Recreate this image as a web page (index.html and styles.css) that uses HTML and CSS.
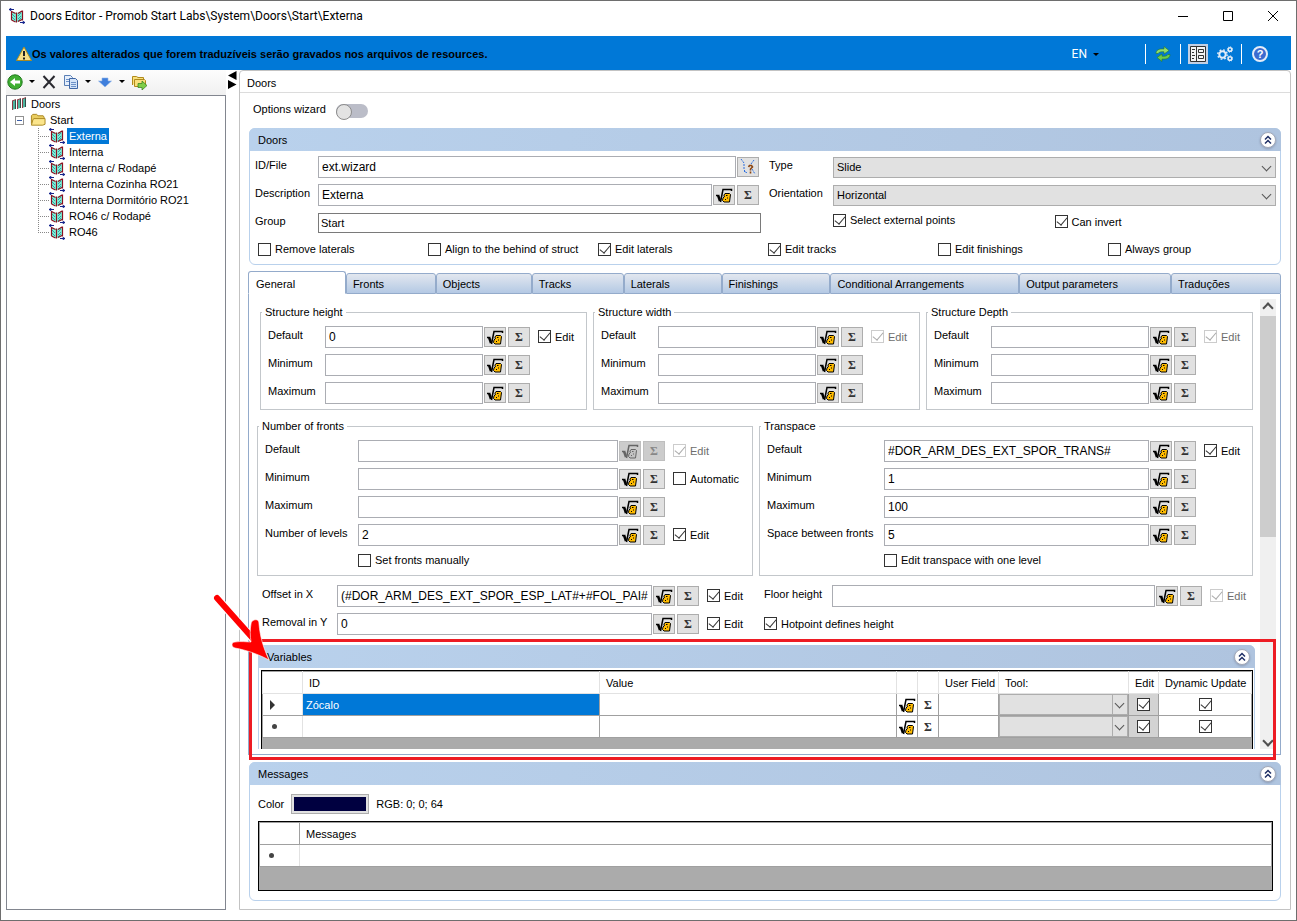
FILE: index.html
```html
<!DOCTYPE html>
<html lang="en">
<head>
    <meta charset="UTF-8">
    <meta name="viewport" content="width=device-width, initial-scale=1.0">
    <title>Doors Editor</title>
    <link rel="stylesheet" href="styles.css">
</head>
<body>
    <!-- Shared icons -->
    <svg class="sprite" aria-hidden="true">
        <symbol id="i-door" viewBox="0 0 16 16">
            <path d="M2 3l5 2v9l-5-2zM8 5l5-2v9l-5 2z" fill="#7df0d8"/>
            <path d="M3 6l3 3M3 9l3 3M9 8l3-3M9 11l3-3M9 13l3-3" stroke="#2fa5a8" stroke-width="1"/>
            <path d="M2.500 3v9M2.500 3.500l4 2M7.500 4.500v10M9 5.500l4-2.500M13.500 2.500v10M2.500 12l4 2M9 13.500l4-2" fill="none" stroke="#8b1020" stroke-width="1.200"/>
            <path d="M0 1.500h5M0 1.500l2-1v2zM11 14.500h5M16 14.500l-2-1v2z" stroke="#15248c" fill="#15248c" stroke-width="1"/>
        </symbol>
        <symbol id="i-root" viewBox="0 0 16 16">
            <path d="M1 5l3-1v9l-3 1zM6 4l3-1v9l-3 1zM11 3l3-1v9l-3 1z" fill="#4fb59f"/>
            <path d="M1.500 5v9M6.500 4v9M11.500 3v9M1 5l4-1.500M6 4l4-1.500M11 3l4-1.500" fill="none" stroke="#8f3a44" stroke-width="1"/>
            <path d="M4.500 4v9M9.500 3v9M14.500 2v9" stroke="#2f4f4a" stroke-width="1"/>
        </symbol>
        <symbol id="i-folder" viewBox="0 0 17 16">
            <path d="M1.500 12V3.500L3 2h4l1.500 1.500H14L15 5v2" fill="#e9cd60" stroke="#a98520"/>
            <path d="M1.500 13.500h12l2.500-1V6.500L4 6.500l-1 1.500z" fill="#fbe58c" stroke="#a98520"/>
        </symbol>
        <symbol id="i-root-a" viewBox="0 0 18 18">
            <path d="M1 9.500h2" stroke="#000" stroke-width="1.500"/>
            <path d="M3 9l2 6" stroke="#000" stroke-width="2.500"/>
            <path d="M5.500 16L8 3.500h8.500V5" fill="none" stroke="#000" stroke-width="1.500"/>
            <path d="M10 7.500h4.500l1 1-1 7.500H9l-1.500-1.500L8 12l1.500-1.500H9V9z" fill="#fb0" stroke="#000" stroke-width="1"/>
            <path d="M11 9.500h1.500M10 13.500h1M12.500 11.500v1" stroke="#000" stroke-width="1"/>
        </symbol>
        <symbol id="i-up" viewBox="0 0 18 18">
            <circle cx="9" cy="9" r="7.500" fill="#fff" stroke="#a3a9b8" stroke-width="1"/>
            <path d="M6 8.500l3-3 3 3M6 12.500l3-3 3 3" fill="none" stroke="#1f2f66" stroke-width="1.500"/>
        </symbol>
    </svg>

    <div class="window">
        <header class="titlebar">
            <svg class="icon"><use href="#i-door"/></svg>
            <h1>Doors Editor - Promob Start Labs\System\Doors\Start\Externa</h1>
            <div class="win-buttons">
                <button aria-label="Minimize"><svg viewBox="0 0 12 12"><path d="M1 6.500h10" stroke="#000"/></svg></button>
                <button aria-label="Maximize"><svg viewBox="0 0 12 12"><path d="M1.500 1.500h9v9h-9z" fill="none" stroke="#000"/></svg></button>
                <button aria-label="Close"><svg viewBox="0 0 12 12"><path d="M1 1l10 10M11 1L1 11" stroke="#000"/></svg></button>
            </div>
        </header>

        <div class="banner">
            <svg class="icon" viewBox="0 0 16 16"><path d="M8 1l7.500 13.500H.5z" fill="#f8e08a" stroke="#a98a20"/><path d="M8 5v5M8 11.500v2" stroke="#222" stroke-width="2"/></svg>
            <strong>Os valores alterados que forem traduzíveis serão gravados nos arquivos de resources.</strong>
            <button class="lang">EN <span class="caret"></span></button>
            <div class="banner-tools">
                <button aria-label="Refresh"><svg class="icon" viewBox="0 0 16 16"><path d="M1 7.500C1 4 4 2.500 9 3V.5l5 4-5 3.500V5.800C6 5.500 4 6 3 7.500z" fill="#8fdc6c" stroke="#2c7a22" stroke-width=".6"/><path d="M15 8.500c0 3.500-3 5-8 4.500v2.500l-5-4L7 8v2.200c3 .3 5-.2 6-1.700z" fill="#6acb4c" stroke="#2c7a22" stroke-width=".6"/></svg></button>
                <button class="pressed" aria-label="Form view"><svg class="icon" viewBox="0 0 16 16"><path d="M.5.5h15v15H.5z" fill="#f4f4f4" stroke="#333"/><path d="M6.500 1v14M2 3.500h3M2 6.500h2M2 9.500h3M2 12.500h2M8.500 3.500h5v3h-5zM8.500 9.500h5v3h-5z" fill="none" stroke="#333"/></svg></button>
                <button aria-label="Settings"><svg class="icon" viewBox="0 0 16 16"><circle cx="5.500" cy="8.500" r="3.200" fill="none" stroke="#e4edf7" stroke-width="2"/><circle cx="5.500" cy="8.500" r="4.700" fill="none" stroke="#e4edf7" stroke-width="1.400" stroke-dasharray="1.800 1.900"/><circle cx="13" cy="3.500" r="1.800" fill="none" stroke="#e4edf7" stroke-width="1.500"/><circle cx="13" cy="3.500" r="2.700" fill="none" stroke="#e4edf7" stroke-dasharray="1 1.100"/><circle cx="13" cy="12.500" r="1.800" fill="none" stroke="#e4edf7" stroke-width="1.500"/><circle cx="13" cy="12.500" r="2.700" fill="none" stroke="#e4edf7" stroke-dasharray="1 1.100"/></svg></button>
                <button class="help" aria-label="Help"><span>?</span></button>
            </div>
        </div>

        <div class="content">
            <aside class="sidebar">
                <div class="toolbar">
                    <button aria-label="Back"><svg class="icon" viewBox="0 0 16 16"><circle cx="8" cy="8" r="7.200" fill="#3fae32" stroke="#1f7a1c"/><path d="M3 8l5-4v2.500h5v3H8V12z" fill="#fff"/></svg></button>
                    <span class="caret"></span>
                    <button aria-label="Delete"><svg class="icon" viewBox="0 0 16 16"><path d="M2.500 2l11 12M13.500 2l-11 12" stroke="#2a2a30" stroke-width="2"/></svg></button>
                    <button aria-label="Copy"><svg class="icon" viewBox="0 0 16 16"><path d="M1.500 1.500h6l2 2v8h-8z" fill="#e6effb" stroke="#5a7fb5"/><path d="M6.500 4.500h6l2 2v8h-8z" fill="#d3e3f8" stroke="#3f66a5"/><path d="M3 5.500h3M3 7.500h3M8 8.500h5M8 10.500h5M8 12.500h5" stroke="#6d92c8"/></svg></button>
                    <span class="caret"></span>
                    <button aria-label="Move down"><svg class="icon" viewBox="0 0 16 16"><path d="M5 4h6v3h3.500L8 13 1.500 7H5z" fill="#3f7fdc" stroke="#8fb4e8" stroke-width=".6"/></svg></button>
                    <span class="caret"></span>
                    <button aria-label="Export"><svg class="icon" viewBox="0 0 16 16"><path d="M1.500 11V2.500h4l1.500 1h5.500v2M3.500 12.500v-7h10l1 1v4.500l-2 1.500z" fill="#f9e07c" stroke="#b08a1c"/><path d="M7 9.500h4V7l5 4.500-5 4.500v-2.500H7z" fill="#7fce48" stroke="#2f7d1a" stroke-width=".7"/></svg></button>
                </div>
                <ul class="tree">
                    <li><svg class="icon"><use href="#i-root"/></svg><span>Doors</span></li>
                    <li class="level1"><i class="expander"></i><svg class="icon"><use href="#i-folder"/></svg><span>Start</span></li>
                    <li class="level2"><i class="branch"></i><svg class="icon"><use href="#i-door"/></svg><span class="selected">Externa</span></li>
                    <li class="level2"><i class="branch"></i><svg class="icon"><use href="#i-door"/></svg><span>Interna</span></li>
                    <li class="level2"><i class="branch"></i><svg class="icon"><use href="#i-door"/></svg><span>Interna c/ Rodapé</span></li>
                    <li class="level2"><i class="branch"></i><svg class="icon"><use href="#i-door"/></svg><span>Interna Cozinha RO21</span></li>
                    <li class="level2"><i class="branch"></i><svg class="icon"><use href="#i-door"/></svg><span>Interna Dormitório RO21</span></li>
                    <li class="level2"><i class="branch"></i><svg class="icon"><use href="#i-door"/></svg><span>RO46 c/ Rodapé</span></li>
                    <li class="level2"><i class="branch last"></i><svg class="icon"><use href="#i-door"/></svg><span>RO46</span></li>
                </ul>
            </aside>

            <div class="splitter">
                <svg viewBox="0 0 9 18"><path d="M8.500 0v9L0 4.500zM0 9v9l8.500-4.500z"/></svg>
            </div>

            <main class="editor">
                <h2 class="editor-title">Doors</h2>
                <div class="wizard">
                    <label for="wizard">Options wizard</label>
                    <input type="checkbox" class="switch" id="wizard">
                </div>

                <section class="group">
                    <div class="group-header"><h3>Doors</h3><button class="collapse" aria-label="Collapse"><svg><use href="#i-up"/></svg></button></div>
                    <div class="door-form">
                        <div class="row">
                            <label for="file">ID/File</label>
                            <input type="text" id="file" value="ext.wizard">
                            <button class="tool" aria-label="Pick"><svg viewBox="0 0 18 18"><path d="M2 1l3 4v7l3 3M15 2l-3 4M13 11l3 5M5 13l2 2" fill="none" stroke="#2c6fe0" stroke-dasharray="2 1"/><path d="M9.500 9l1-1.500h2l1 1.500-2 2v1.500M11.500 13.500v2" fill="none" stroke="#8a4512" stroke-width="1.600"/></svg></button>
                        </div>
                        <div class="row">
                            <label for="type">Type</label>
                            <span class="select"><select id="type"><option>Slide</option></select></span>
                        </div>
                        <div class="row">
                            <label for="desc">Description</label>
                            <input type="text" id="desc" value="Externa">
                            <button class="tool" aria-label="Formula"><svg><use href="#i-root-a"/></svg></button>
                            <button class="tool sum">Σ</button>
                        </div>
                        <div class="row">
                            <label for="orient">Orientation</label>
                            <span class="select"><select id="orient"><option>Horizontal</option></select></span>
                        </div>
                        <div class="row">
                            <label for="group">Group</label>
                            <input type="text" class="combo" id="group" value="Start">
                        </div>
                        <div class="row pair">
                            <label class="check"><input type="checkbox" checked>Select external points</label>
                            <label class="check"><input type="checkbox" checked>Can invert</label>
                        </div>
                    </div>
                    <div class="flags">
                        <label class="check"><input type="checkbox">Remove laterals</label>
                        <label class="check"><input type="checkbox">Align to the behind of struct</label>
                        <label class="check"><input type="checkbox" checked>Edit laterals</label>
                        <label class="check"><input type="checkbox" checked>Edit tracks</label>
                        <label class="check"><input type="checkbox">Edit finishings</label>
                        <label class="check"><input type="checkbox">Always group</label>
                    </div>
                </section>

                <nav class="tabs">
                    <button class="tab active">General</button>
                    <button class="tab">Fronts</button>
                    <button class="tab">Objects</button>
                    <button class="tab">Tracks</button>
                    <button class="tab">Laterals</button>
                    <button class="tab">Finishings</button>
                    <button class="tab">Conditional Arrangements</button>
                    <button class="tab">Output parameters</button>
                    <button class="tab">Traduções</button>
                </nav>

                <div class="tab-panel">
                    <div class="pane">
                        <div class="structs">
                            <fieldset>
                                <legend>Structure height</legend>
                                <div class="row"><label for="sh1">Default</label><input type="text" id="sh1" value="0"><button class="tool" aria-label="Formula"><svg><use href="#i-root-a"/></svg></button><button class="tool sum">Σ</button><label class="check"><input type="checkbox" checked>Edit</label></div>
                                <div class="row"><label for="sh2">Minimum</label><input type="text" id="sh2"><button class="tool" aria-label="Formula"><svg><use href="#i-root-a"/></svg></button><button class="tool sum">Σ</button><span class="check"></span></div>
                                <div class="row"><label for="sh3">Maximum</label><input type="text" id="sh3"><button class="tool" aria-label="Formula"><svg><use href="#i-root-a"/></svg></button><button class="tool sum">Σ</button><span class="check"></span></div>
                            </fieldset>
                            <fieldset>
                                <legend>Structure width</legend>
                                <div class="row"><label for="sw1">Default</label><input type="text" id="sw1"><button class="tool" aria-label="Formula"><svg><use href="#i-root-a"/></svg></button><button class="tool sum">Σ</button><label class="check off"><input type="checkbox" checked disabled>Edit</label></div>
                                <div class="row"><label for="sw2">Minimum</label><input type="text" id="sw2"><button class="tool" aria-label="Formula"><svg><use href="#i-root-a"/></svg></button><button class="tool sum">Σ</button><span class="check"></span></div>
                                <div class="row"><label for="sw3">Maximum</label><input type="text" id="sw3"><button class="tool" aria-label="Formula"><svg><use href="#i-root-a"/></svg></button><button class="tool sum">Σ</button><span class="check"></span></div>
                            </fieldset>
                            <fieldset>
                                <legend>Structure Depth</legend>
                                <div class="row"><label for="sd1">Default</label><input type="text" id="sd1"><button class="tool" aria-label="Formula"><svg><use href="#i-root-a"/></svg></button><button class="tool sum">Σ</button><label class="check off"><input type="checkbox" checked disabled>Edit</label></div>
                                <div class="row"><label for="sd2">Minimum</label><input type="text" id="sd2"><button class="tool" aria-label="Formula"><svg><use href="#i-root-a"/></svg></button><button class="tool sum">Σ</button><span class="check"></span></div>
                                <div class="row"><label for="sd3">Maximum</label><input type="text" id="sd3"><button class="tool" aria-label="Formula"><svg><use href="#i-root-a"/></svg></button><button class="tool sum">Σ</button><span class="check"></span></div>
                            </fieldset>
                        </div>

                        <div class="halves">
                            <fieldset class="fronts">
                                <legend>Number of fronts</legend>
                                <div class="row"><label for="nf1">Default</label><input type="text" id="nf1"><button class="tool" aria-label="Formula" disabled><svg><use href="#i-root-a"/></svg></button><button class="tool sum" disabled>Σ</button><label class="check off"><input type="checkbox" checked disabled>Edit</label></div>
                                <div class="row"><label for="nf2">Minimum</label><input type="text" id="nf2"><button class="tool" aria-label="Formula"><svg><use href="#i-root-a"/></svg></button><button class="tool sum">Σ</button><label class="check"><input type="checkbox">Automatic</label></div>
                                <div class="row"><label for="nf3">Maximum</label><input type="text" id="nf3"><button class="tool" aria-label="Formula"><svg><use href="#i-root-a"/></svg></button><button class="tool sum">Σ</button><span class="check"></span></div>
                                <div class="row"><label for="nf4">Number of levels</label><input type="text" id="nf4" value="2"><button class="tool" aria-label="Formula"><svg><use href="#i-root-a"/></svg></button><button class="tool sum">Σ</button><label class="check"><input type="checkbox" checked>Edit</label></div>
                                <div class="indent"><label class="check"><input type="checkbox">Set fronts manually</label></div>
                            </fieldset>
                            <fieldset class="transpace">
                                <legend>Transpace</legend>
                                <div class="row"><label for="ts1">Default</label><input type="text" id="ts1" value="#DOR_ARM_DES_EXT_SPOR_TRANS#"><button class="tool" aria-label="Formula"><svg><use href="#i-root-a"/></svg></button><button class="tool sum">Σ</button><label class="check"><input type="checkbox" checked>Edit</label></div>
                                <div class="row"><label for="ts2">Minimum</label><input type="text" id="ts2" value="1"><button class="tool" aria-label="Formula"><svg><use href="#i-root-a"/></svg></button><button class="tool sum">Σ</button><span class="check"></span></div>
                                <div class="row"><label for="ts3">Maximum</label><input type="text" id="ts3" value="100"><button class="tool" aria-label="Formula"><svg><use href="#i-root-a"/></svg></button><button class="tool sum">Σ</button><span class="check"></span></div>
                                <div class="row"><label for="ts4">Space between fronts</label><input type="text" id="ts4" value="5"><button class="tool" aria-label="Formula"><svg><use href="#i-root-a"/></svg></button><button class="tool sum">Σ</button><span class="check"></span></div>
                                <div class="indent"><label class="check"><input type="checkbox">Edit transpace with one level</label></div>
                            </fieldset>
                        </div>

                        <div class="extras">
                            <div class="row offset"><label for="offx">Offset in X</label><input type="text" id="offx" value="(#DOR_ARM_DES_EXT_SPOR_ESP_LAT#+#FOL_PAI#"><button class="tool" aria-label="Formula"><svg><use href="#i-root-a"/></svg></button><button class="tool sum">Σ</button><label class="check"><input type="checkbox" checked>Edit</label></div>
                            <div class="row floor"><label for="floor">Floor height</label><input type="text" id="floor"><button class="tool" aria-label="Formula"><svg><use href="#i-root-a"/></svg></button><button class="tool sum">Σ</button><label class="check off"><input type="checkbox" checked disabled>Edit</label></div>
                            <div class="row offset"><label for="remy">Removal in Y</label><input type="text" id="remy" value="0"><button class="tool" aria-label="Formula"><svg><use href="#i-root-a"/></svg></button><button class="tool sum">Σ</button><label class="check"><input type="checkbox" checked>Edit</label></div>
                            <label class="check"><input type="checkbox" checked>Hotpoint defines height</label>
                        </div>

                        <section class="group variables">
                            <div class="group-header"><h3>Variables</h3><button class="collapse" aria-label="Collapse"><svg><use href="#i-up"/></svg></button></div>
                            <div class="grid-box">
                                <table class="var-table">
                                    <colgroup><col class="c-mark"><col><col><col class="c-btn"><col class="c-btn"><col class="c-user"><col class="c-tool"><col class="c-edit"><col class="c-dyn"></colgroup>
                                    <thead>
                                        <tr><th></th><th>ID</th><th>Value</th><th></th><th></th><th>User Field</th><th>Tool:</th><th>Edit</th><th>Dynamic Update</th></tr>
                                    </thead>
                                    <tbody>
                                        <tr>
                                            <td class="mark"><i class="current"></i></td><td class="selected">Zócalo</td><td></td>
                                            <td class="cell-btn"><button aria-label="Formula"><svg><use href="#i-root-a"/></svg></button></td><td class="cell-btn"><button class="sum">Σ</button></td><td></td>
                                            <td class="cell-select"><span class="select"><select aria-label="Tool"><option></option></select></span></td>
                                            <td class="cell-check grey"><input type="checkbox" aria-label="Edit" checked></td><td class="cell-check"><input type="checkbox" aria-label="Dynamic Update" checked></td>
                                        </tr>
                                        <tr>
                                            <td class="mark"><i class="new"></i></td><td></td><td></td>
                                            <td class="cell-btn"><button aria-label="Formula"><svg><use href="#i-root-a"/></svg></button></td><td class="cell-btn"><button class="sum">Σ</button></td><td></td>
                                            <td class="cell-select"><span class="select"><select aria-label="Tool"><option></option></select></span></td>
                                            <td class="cell-check grey"><input type="checkbox" aria-label="Edit" checked></td><td class="cell-check"><input type="checkbox" aria-label="Dynamic Update" checked></td>
                                        </tr>
                                    </tbody>
                                </table>
                            </div>
                        </section>
                    </div>
                    <div class="scrollbar"><span class="arrow up"></span><span class="thumb"></span><span class="arrow down"></span></div>

                    <!-- Callout around the variables grid -->
                    <div class="callout">
                        <svg class="pointer" viewBox="0 0 60 70"><path d="M7 8L48 55" stroke="#fff" stroke-width="8" stroke-linecap="round"/><path d="M6 7L46 52" stroke="#f00" stroke-width="6" stroke-linecap="round"/><path d="M43 29c4-1 5 1 5 4 1 12 4 23 10 36C47 63 35 59 24 57c-4-1-4-6 0-6 6-1 12 0 16 0-1-6-1-13 0-18 0-2 1-3 3-4z" fill="#f00" stroke="#fff" stroke-width=".6"/></svg>
                    </div>
                </div>

                <section class="group messages">
                    <div class="group-header"><h3>Messages</h3><button class="collapse" aria-label="Collapse"><svg><use href="#i-up"/></svg></button></div>
                    <div class="color-row">
                        <label for="color">Color</label>
                        <button class="swatch" id="color" aria-label="Color"></button>
                        <span>RGB: 0; 0; 64</span>
                    </div>
                    <div class="grid-box">
                        <table class="msg-table">
                            <colgroup><col class="c-mark"><col></colgroup>
                            <thead><tr><th></th><th>Messages</th></tr></thead>
                            <tbody><tr><td class="mark"><i class="new"></i></td><td></td></tr></tbody>
                        </table>
                    </div>
                </section>
            </main>
        </div>
    </div>
</body>
</html>
```
FILE: styles.css
```css
* {
    margin: 0;
    padding: 0;
    box-sizing: border-box;
}

body {
    font-family: "Liberation Sans", Arial, sans-serif;
    font-size: 11px;
    line-height: 14px;
    color: #000;
    background: #fff;
}

button,
input,
select {
    font: inherit;
    color: inherit;
}

button {
    border: none;
    background: none;
    display: flex;
    align-items: center;
    justify-content: center;
}

h1, h2, h3 {
    font-size: inherit;
    font-weight: normal;
}

.sprite {
    display: none;
}

.icon {
    width: 16px;
    height: 16px;
    flex: none;
    display: block;
}

.caret {
    border: 3px solid transparent;
    border-top-color: #000;
    border-bottom: none;
}

.window {
    height: 100vh;
    min-height: 900px;
    display: flex;
    flex-direction: column;
    border: 1px solid #6e6e6e;
    padding: 0 5px 10px;
}

/* Title bar */
.titlebar {
    height: 35px;
    flex: none;
    display: flex;
    align-items: center;
    gap: 5px;
    padding: 0 12px 6px 3px;
}

.titlebar h1 {
    flex: 1;
    font-family: Roboto, "Segoe UI", sans-serif;
    font-size: 12px;
}

.win-buttons {
    display: flex;
    gap: 33px;
}

.win-buttons svg {
    width: 12px;
    height: 12px;
}

/* Blue banner */
.banner {
    height: 34px;
    flex: none;
    display: flex;
    align-items: center;
    background: #0078d7;
    padding: 2px 23px 0 10px;
}

.lang {
    margin-left: auto;
    gap: 6px;
    color: #fff;
    font-family: Roboto, "Segoe UI", sans-serif;
    font-size: 12px;
}

.banner-tools {
    display: flex;
    align-items: center;
    margin-left: 46px;
}

.banner-tools button {
    height: 20px;
    width: 27px;
}

.banner-tools button:first-child {
    width: 36px;
    border-left: 1px solid #fff;
    border-right: 1px solid #fff;
}

.banner-tools button.pressed {
    width: 20px;
    margin-left: 7px;
    background: #c3d0e4;
}

.banner-tools button:nth-child(3) {
    width: 34px;
    border-right: 1px solid #fff;
}

.banner-tools .help {
    width: 16px;
    height: 16px;
    margin-left: 10px;
    border: 2px solid #e4ecf8;
    border-radius: 50%;
    background: #3c6bd0;
    color: #fff;
    font-weight: bold;
}

/* Main split */
.content {
    flex: 1;
    min-height: 0;
    display: flex;
}

.sidebar {
    width: 220px;
    flex: none;
    display: flex;
    flex-direction: column;
}

.toolbar {
    height: 25px;
    display: flex;
    align-items: center;
    gap: 6px;
    padding: 0 1px 2px;
    background: linear-gradient(#fdfdfd, #f0f0f0);
}

.tree {
    flex: 1;
    list-style: none;
    border: 1px solid #82868f;
    overflow: hidden;
}

.tree li {
    height: 16px;
    display: flex;
    align-items: center;
    gap: 2px;
    padding-left: 4px;
}

.tree span {
    padding: 1px 2px;
}

.tree .level1 {
    padding-left: 8px;
}

.tree .level2 {
    padding-left: 31px;
}

.tree .selected {
    background: #0078d7;
    color: #fff;
}

.expander {
    width: 9px;
    height: 9px;
    margin-right: 4px;
    border: 1px solid #919191;
    background: linear-gradient(#3b5ea8, #3b5ea8) center / 5px 1px no-repeat;
}

.branch {
    width: 11px;
    height: 16px;
    margin-right: -2px;
    background:
        repeating-linear-gradient(#888 0 1px, transparent 1px 2px) left top / 1px 100% no-repeat,
        repeating-linear-gradient(90deg, #888 0 1px, transparent 1px 2px) left center / 100% 1px no-repeat;
}

.branch.last {
    background-size: 1px 50%, 100% 1px;
}

.splitter {
    width: 13px;
    flex: none;
    padding: 1px 2px;
}

.splitter svg {
    width: 9px;
    height: 18px;
}

/* Editor */
.editor {
    flex: 1;
    min-width: 0;
    display: flex;
    flex-direction: column;
    border: 1px solid #c3c3c3;
    border-radius: 4px 4px 0 0;
    padding: 0 9px 8px;
}

.editor-title {
    height: 22px;
    padding: 5px 7px;
    margin: 0 -9px;
    border-bottom: 1px solid #dcdcdc;
    flex: none;
}

.wizard {
    height: 35px;
    flex: none;
    display: flex;
    align-items: center;
    gap: 10px;
    padding-left: 4px;
}

.wizard label {
    padding-bottom: 4px;
}

.switch {
    appearance: none;
    width: 32px;
    height: 14px;
    border-radius: 7px;
    background: #bbbdc8;
}

.switch::before {
    content: "";
    display: block;
    width: 14px;
    height: 14px;
    border-radius: 50%;
    border: 1px solid #8d8d8d;
    background: #e3e3e3;
}

.group {
    flex: none;
    border: 1px solid #b9d1ec;
    border-radius: 6px;
    background: #fff;
}

.group-header {
    height: 23px;
    margin: -1px -1px 0;
    padding: 0 4px 0 9px;
    display: flex;
    align-items: center;
    justify-content: space-between;
    border-radius: 6px 6px 0 0;
    background: linear-gradient(90deg, #b9d1ec, #afc4df);
}

.collapse svg {
    width: 18px;
    height: 18px;
    filter: drop-shadow(0 1px 1px #8a9ab5);
}

.door-form {
    display: grid;
    grid-template-columns: 506fr 507fr;
    gap: 6px 8px;
    padding: 5px 4px 0 5px;
}

.row {
    display: flex;
    align-items: center;
    height: 22px;
}

.row > label:first-child {
    width: 57px;
    flex: none;
    padding-bottom: 4px;
    white-space: nowrap;
}

.door-form .row > label:first-child {
    width: 63px;
}

.door-form .row:nth-child(even) > label:first-child {
    width: 64px;
}

input[type="text"] {
    flex: 1;
    min-width: 0;
    height: 22px;
    padding: 0 3px;
    border: 1px solid #abadb3;
    background: #fff;
    font-size: 12px;
}

input[type="text"].combo {
    height: 20px;
    padding: 0 2px;
    border-color: #7a7a7a;
    font-size: 11px;
}

.tool {
    width: 22px;
    height: 20px;
    flex: none;
    margin-left: 1px;
    border: 1px solid #adadad;
    background: #e1e1e1;
}

.tool.sum {
    margin-left: 2px;
}

.door-form .tool:last-child {
    margin-right: 2px;
}

.tool svg {
    width: 18px;
    height: 18px;
}

.sum {
    font-family: "Liberation Serif", serif;
    font-size: 12px;
    font-weight: bold;
    color: #333;
}

.tool:disabled {
    background: #ccc;
    border-color: #bfbfbf;
    color: #888;
}

.tool:disabled svg {
    filter: grayscale(1);
    opacity: 0.5;
}

.select {
    flex: 1;
    min-width: 0;
    height: 21px;
    position: relative;
}

.select select {
    appearance: none;
    display: block;
    width: 100%;
    height: 100%;
    padding: 0 3px;
    border: 1px solid #adadad;
    border-radius: 0;
    background: #e1e1e1;
}

.select::after {
    content: "";
    position: absolute;
    right: 6px;
    top: 6px;
    width: 6px;
    height: 6px;
    border: solid #555;
    border-width: 0 1px 1px 0;
    transform: rotate(45deg);
    pointer-events: none;
}

.check {
    display: flex;
    align-items: center;
    gap: 4px;
    white-space: nowrap;
}

.check.off {
    color: #6d6d6d;
}

.row .check {
    width: 48px;
    margin-left: 8px;
    padding-bottom: 1px;
    flex: none;
}

.row.pair .check {
    flex: 1;
    margin: 0;
}

.row.pair {
    padding: 0 0 2px 64px;
}

input[type="checkbox"]:not(.switch) {
    appearance: none;
    width: 13px;
    height: 13px;
    flex: none;
    border: 1px solid #333;
    background: #fff;
}

input[type="checkbox"]:not(.switch):checked::after {
    content: "";
    display: block;
    width: 5px;
    height: 9px;
    margin: -1px 0 0 3px;
    border: solid #333;
    border-width: 0 1px 1px 0;
    transform: rotate(40deg);
}

input[type="checkbox"]:disabled:not(.switch) {
    border-color: #ccc;
}

input[type="checkbox"]:disabled:not(.switch)::after {
    border-color: #aaa;
}

.flags {
    display: grid;
    grid-template-columns: repeat(6, 1fr);
    padding: 8px 2px 8px 8px;
}

/* Tabs */
.tabs {
    display: grid;
    grid-template-columns: 98fr 90fr 96fr 92fr 98fr 109fr 189fr 152fr 110fr;
    align-items: end;
    margin: 6px 0 0 -1px;
    flex: none;
}

.tab {
    height: 21px;
    justify-content: flex-start;
    padding: 0 6px;
    border: 1px solid #94abcb;
    border-radius: 3px 3px 0 0;
    background: linear-gradient(#e2e7ef, #b4c9e4);
    white-space: nowrap;
}

.tab.active {
    height: 23px;
    padding: 2px 7px 0;
    border-bottom-color: #fff;
    background: #fff;
}

.tab-panel {
    flex: 1;
    min-height: 0;
    display: flex;
    position: relative;
    margin: 0 0 7px -1px;
    padding-bottom: 5px;
    border: 1px solid #94abcb;
    border-top: none;
}

.pane {
    flex: 1;
    min-width: 0;
    overflow: hidden;
    padding: 11px 7px 0 8px;
}

.scrollbar {
    width: 16px;
    margin: 5px 4px 0 0;
    flex: none;
    display: flex;
    flex-direction: column;
    background: #f0f0f0;
}

.scrollbar .thumb {
    flex: 1;
    margin-bottom: 195px;
    background: #cdcdcd;
}

.scrollbar .arrow {
    height: 17px;
    flex: none;
    display: flex;
    align-items: center;
    justify-content: center;
}

.scrollbar .arrow::before {
    content: "";
    width: 6px;
    height: 6px;
    border: solid #505050;
    border-width: 2px 0 0 2px;
    transform: rotate(45deg);
}

.scrollbar .down::before {
    transform: rotate(225deg);
}

fieldset {
    min-width: 0;
    border: 1px solid #c3c7cb;
    padding: 7px 0 5px 7px;
    display: flex;
    flex-direction: column;
    gap: 6px;
}

legend {
    margin-left: -6px;
    padding: 0 3px;
}

.structs {
    display: grid;
    grid-template-columns: repeat(3, 1fr);
    gap: 6px;
    margin-left: 3px;
}

.halves {
    display: grid;
    grid-template-columns: 496fr 494fr;
    gap: 6px;
    margin-top: 9px;
}

.fronts .row > label:first-child {
    width: 93px;
}

.fronts .row .check {
    width: 79px;
}

.transpace .row > label:first-child {
    width: 117px;
}

.indent {
    height: 18px;
    display: flex;
    padding: 0 0 2px 93px;
}

.transpace .indent {
    padding-left: 117px;
}

.extras {
    display: grid;
    grid-template-columns: 502fr 489fr;
    gap: 6px 0;
    margin: 9px 0 10px 5px;
}

.extras > .check {
    padding-bottom: 1px;
}

.offset > label:first-child {
    width: 75px;
}

.offset .check {
    width: 57px;
}

.floor > label:first-child {
    width: 68px;
}

.floor .check {
    width: 43px;
}

.variables {
    margin: 0 -2px 0 1px;
}

.variables .grid-box {
    margin: 2px 1px 0 2px;
    height: 90px;
}

/* Data grids */
.grid-box {
    border: 1px solid #000;
    background: #ababab;
}

table {
    width: 100%;
    table-layout: fixed;
    border-collapse: collapse;
    background: #fff;
}

th {
    height: 22px;
    padding: 0 6px;
    border: 1px solid #e2e2e2;
    border-top-color: #a0a0a0;
    text-align: left;
    font-weight: normal;
    white-space: nowrap;
}

td {
    height: 22px;
    padding: 0 3px;
    border: 1px solid #a0a0a0;
}

td.selected {
    background: #0078d7;
    color: #fff;
}

td.mark {
    border-right-color: #e2e2e2;
    padding: 0 7px;
}

.c-mark {
    width: 40px;
}

.c-btn {
    width: 21px;
}

.c-user {
    width: 60px;
}

.c-tool {
    width: 130px;
}

.c-edit {
    width: 30px;
}

.c-dyn {
    width: 93px;
}

.cell-btn,
.cell-select {
    padding: 0;
}

.cell-btn button {
    width: 20px;
    height: 20px;
}

.cell-btn svg {
    width: 18px;
    height: 18px;
}

.cell-select .select {
    display: block;
}

.cell-select .select::before {
    content: "";
    position: absolute;
    top: 0;
    bottom: 0;
    right: 15px;
    border-left: 1px solid #adadad;
}

.cell-select .select::after {
    right: 5px;
}

.cell-check input {
    display: block;
    margin: 0 auto;
}

.grey {
    background: #d3d3d3;
}

.mark i {
    display: block;
}

.mark .current {
    width: 0;
    border: 5px solid transparent;
    border-left-color: #333;
    border-right: none;
}

.mark .new {
    width: 5px;
    height: 5px;
    margin-left: 2px;
    border-radius: 50%;
    background: #444;
}

.callout {
    position: absolute;
    left: 0;
    right: 4px;
    bottom: -6px;
    height: 121px;
    border: 3px solid #ed1c24;
    pointer-events: none;
}

.pointer {
    position: absolute;
    left: -41px;
    top: -51px;
    width: 60px;
    height: 70px;
}

/* Messages */
.color-row {
    display: flex;
    align-items: center;
    height: 36px;
    gap: 7px;
    padding: 2px 0 0 8px;
}

.swatch {
    width: 78px;
    height: 20px;
    border: 1px solid #adadad;
    background: #000040;
    box-shadow: inset 0 0 0 2px #e1e1e1;
}

.messages .grid-box {
    height: 70px;
    margin: 0 7px 9px 8px;
}

.msg-table th {
    border-color: #a0a0a0;
}
```
